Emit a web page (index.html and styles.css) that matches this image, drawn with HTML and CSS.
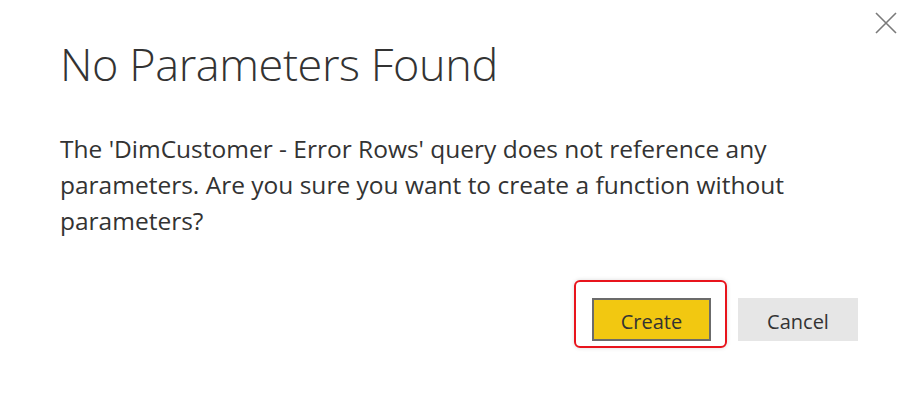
FILE: index.html
```html
<!DOCTYPE html>
<html>
<head>
<meta charset="utf-8">
<link rel="stylesheet" href="styles.css">
</head>
<body>
<div class="dialog">
  <button class="close" aria-label="Close">
    <svg width="22" height="22" viewBox="0 0 22 22"><path d="M1 1L21 21M21 1L1 21" stroke="#7a7a7a" stroke-width="1.6" fill="none"/></svg>
  </button>
  <h1 class="title">No Parameters Found</h1>
  <p class="message">The 'DimCustomer - Error Rows' query does not reference any parameters. Are you sure you want to create a function without parameters?</p>
  <div class="actions">
    <div class="highlight"><button class="btn primary">Create</button></div>
    <button class="btn secondary">Cancel</button>
  </div>
</div>
</body>
</html>
```
FILE: styles.css
```css
html, body {
  margin: 0;
  padding: 0;
  background: #ffffff;
}
body {
  width: 918px;
  height: 402px;
  overflow: hidden;
  font-family: "Open Sans", "Noto Sans", sans-serif;
  color: #333333;
}
.dialog {
  position: relative;
  padding: 32px 60px 0 60px;
}
.close {
  position: absolute;
  top: 12px;
  right: 21px;
  border: 0;
  background: transparent;
  padding: 0;
  width: 22px;
  height: 22px;
}
.close svg { display: block; }
.title {
  margin: 0;
  font-weight: 300;
  font-size: 45px;
  line-height: 64px;
  color: #333333;
  letter-spacing: -0.4px;
}
.message {
  margin: 35px 0 0 0;
  font-size: 24.5px;
  line-height: 36px;
  color: #333333;
  width: 780px;
}
.actions {
  display: flex;
  justify-content: flex-end;
  align-items: flex-start;
  margin-top: 41px;
}
.highlight {
  border: 2px solid #e8141c;
  border-radius: 6px;
  padding: 16px 14px 5px 16px;
  box-shadow: 0 0 4px rgba(0,0,0,0.15);
}
.btn {
  font-family: "Open Sans", "Noto Sans", sans-serif;
  font-size: 20px;
  height: 43px;
  width: 120px;
  color: #333333;
  cursor: pointer;
  padding: 3px 0 0 0;
}
.primary {
  background: #f2c811;
  border: 2px solid #6b6b6b;
  width: 119px;
  display: block;
}
.secondary {
  background: #e6e6e6;
  border: 0;
  margin-left: 11px;
  margin-top: 18px;
}
```
